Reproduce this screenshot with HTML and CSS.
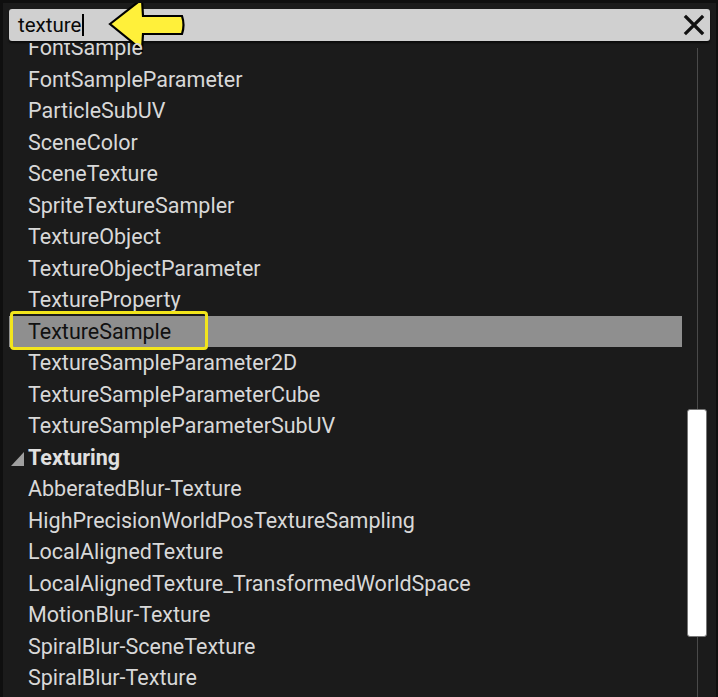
FILE: index.html
```html
<!DOCTYPE html>
<html>
<head>
<meta charset="utf-8">
<link rel="stylesheet" href="styles.css">
</head>
<body>
<div class="frame">
  <div class="search">
    <span class="query">texture</span><span class="caret"></span>
    <span class="spacer"></span>
    <svg class="clear" width="22" height="22" viewBox="0 0 22 22"><path d="M3 3 L19 19 M19 3 L3 19" stroke="#111" stroke-width="3.2" stroke-linecap="square" fill="none"/></svg>
  </div>
  <svg class="arrow" width="90" height="54" viewBox="0 0 90 54">
    <path d="M4 26 L36 1 L37 18 L76 18 Q79 27 76 36 L37 36 L36 52 Z" fill="#fff03a" stroke="#000" stroke-width="2.2" stroke-linejoin="miter"/>
  </svg>
  <div class="content">
    <div class="list">
      <div class="rows">
        <div class="row">FontSample</div>
        <div class="row">FontSampleParameter</div>
        <div class="row">ParticleSubUV</div>
        <div class="row">SceneColor</div>
        <div class="row">SceneTexture</div>
        <div class="row">SpriteTextureSampler</div>
        <div class="row">TextureObject</div>
        <div class="row">TextureObjectParameter</div>
        <div class="row">TextureProperty</div>
        <div class="row selected">TextureSample<span class="focus"></span></div>
        <div class="row">TextureSampleParameter2D</div>
        <div class="row">TextureSampleParameterCube</div>
        <div class="row">TextureSampleParameterSubUV</div>
        <div class="row category"><span class="tri"></span>Texturing</div>
        <div class="row">AbberatedBlur-Texture</div>
        <div class="row">HighPrecisionWorldPosTextureSampling</div>
        <div class="row">LocalAlignedTexture</div>
        <div class="row">LocalAlignedTexture_TransformedWorldSpace</div>
        <div class="row">MotionBlur-Texture</div>
        <div class="row">SpiralBlur-SceneTexture</div>
        <div class="row">SpiralBlur-Texture</div>
      </div>
    </div>
    <div class="scrollbar">
      <div class="thumb"></div>
    </div>
  </div>
</div>
</body>
</html>
```

FILE: styles.css
```css
html, body {
  margin: 0;
  padding: 0;
  background: #101010;
}
.frame {
  position: relative;
  width: 718px;
  height: 697px;
  box-sizing: border-box;
  background: #1b1b1b;
  border-top: 3px solid #0f0f0f;
  border-left: 3px solid #0f0f0f;
  border-right: 2px solid #0f0f0f;
  overflow: hidden;
  display: flex;
  flex-direction: column;
  font-family: Roboto, "Noto Sans", sans-serif;
}
.search {
  margin: 6px 6px 0 6px;
  height: 32px;
  background: #d0d0d0;
  border-radius: 3px;
  box-shadow: 0 2px 2px rgba(0,0,0,0.6);
  display: flex;
  align-items: center;
  padding: 0 5px 0 9px;
  flex: none;
}
.query {
  font-size: 20.5px;
  color: #0a0a0a;
}
.caret {
  width: 2px;
  height: 22px;
  background: #000;
  margin-left: 1px;
}
.spacer {
  flex: 1;
}
.clear {
  display: block;
}
.arrow {
  position: absolute;
  left: 103px;
  top: -5px;
}
.content {
  flex: 1;
  display: flex;
  margin-top: 2px;
  min-height: 0;
}
.list {
  width: 673px;
  margin-left: 6px;
  overflow: hidden;
}
.rows {
  margin-top: -10.75px;
}
.row {
  position: relative;
  height: 31.5px;
  line-height: 31.5px;
  padding-left: 19px;
  font-size: 21.5px;
  color: #d8d8d8;
  white-space: nowrap;
}
.row.selected {
  background: #8f8f8f;
  color: #111;
}
.focus {
  position: absolute;
  left: 1px;
  top: -5px;
  width: 192px;
  height: 33px;
  border: 3px solid #f2e51c;
  border-radius: 4px;
}
.row.category {
  font-weight: bold;
  color: #e0e0e0;
}
.tri {
  position: absolute;
  left: 2px;
  top: 10px;
  width: 0;
  height: 0;
  border-left: 13px solid transparent;
  border-bottom: 14px solid #a0a0a0;
}
.scrollbar {
  width: 28px;
  margin-top: 5px;
  background: linear-gradient(to right, transparent 15px, #4a4a4a 15px, #4a4a4a 16px, transparent 16px);
  display: flex;
  flex-direction: column;
  align-items: center;
}
.thumb {
  margin-top: 361px;
  width: 18px;
  height: 226px;
  background: #ffffff;
  border: 1px solid #777;
  border-radius: 3px;
  margin-left: 1px;
}
```
